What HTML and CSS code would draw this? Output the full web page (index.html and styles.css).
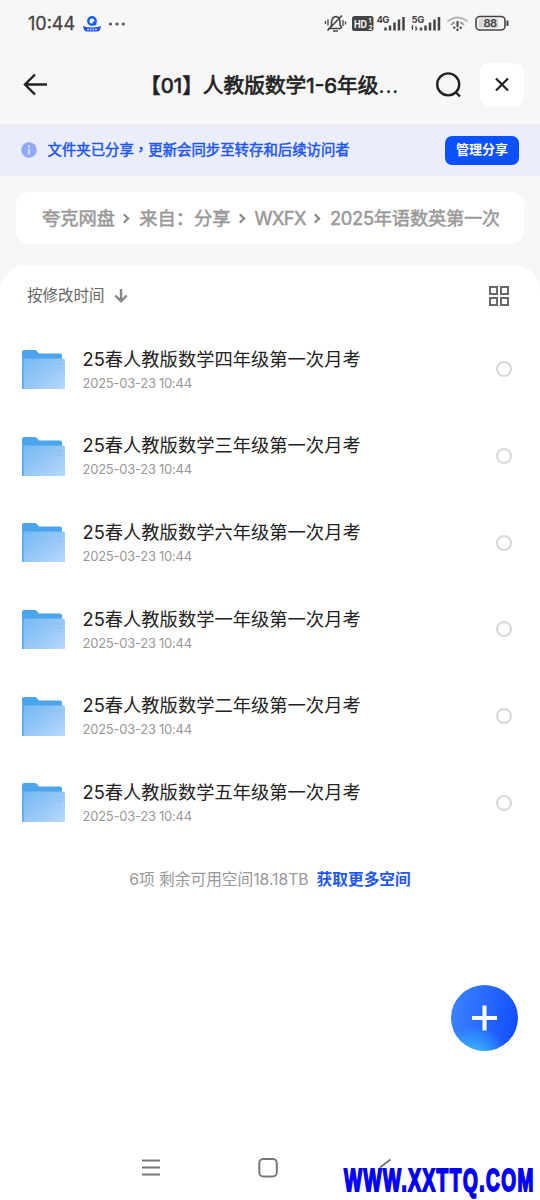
FILE: index.html
```html
<!DOCTYPE html>
<html lang="zh-CN">
<head>
<meta charset="utf-8">
<meta name="viewport" content="width=device-width">
<title>文件夹</title>
<link rel="stylesheet" href="styles.css">
</head>
<body>
<svg class="defs" width="0" height="0">
  <defs>
    <linearGradient id="front" x1="0" y1="0" x2="1" y2="1"><stop offset="0" stop-color="#74b9f2"/><stop offset=".55" stop-color="#98c8f7"/><stop offset="1" stop-color="#b8d9fd"/></linearGradient>
    <symbol id="folder" viewBox="0 0 44 42">
      <path d="M0 40V3q0-2 2-2h11q1.500 0 2.300 1.500L17 4.500h21q2 0 2 2V14H2v26z" fill="#4ba5ec"/>
      <path d="M1.500 9.500H41q2 0 2 2V40H1.500z" fill="url(#front)"/>
      <path d="M1 9v31" stroke="#69b0ea" fill="none"/>
      <path d="M35 15h4M35 19h4" stroke="#83b9e8" stroke-width=".8"/>
    </symbol>
  </defs>
</svg>
<div class="status">
  <span class="clock">10:44</span>
  <svg class="app" width="18" height="17" viewBox="0 0 18 17"><circle cx="9" cy="5" r="3.700" fill="none" stroke="#175cf5" stroke-width="2.400"/><path d="M10 6l3 3" stroke="#175cf5" stroke-width="2"/><path d="M0 10q9 3 18 0-.5 5-3.500 5.500h-11Q.5 15 0 10z" fill="#2455f0"/><path d="M4 13.500h10" stroke="#b9cdff" stroke-width="1.500" stroke-dasharray="2 .7"/></svg>
  <svg class="dots" width="18" height="6" viewBox="0 0 18 6" fill="#555"><circle cx="2.500" cy="3" r="1.600"/><circle cx="9" cy="3" r="1.600"/><circle cx="15.300" cy="3" r="1.600"/></svg>
  <svg class="signals" width="190" height="24" viewBox="322 12 190 24" fill="none" stroke="#444" stroke-width="1.600">
    <path d="M328 28.500h13M330 28l1.500-3v-3q.5-5 4.500-5.500 3.500.5 4 5v3.500l2 3M333 31h5M327.500 30.500L342 15.500"/><path d="M328 19.500v6M325.500 21v3M343 20v6M345.500 21.500v3" stroke-width="1.300"/>
    <rect x="352" y="16" width="21.500" height="15" rx="2.500" fill="#444" stroke="none"/>
    <g fill="#f7f7f7" stroke="none" class="tiny"><text x="354" y="27.500" font-size="10" textLength="13" lengthAdjust="spacingAndGlyphs">HD</text><text x="368.500" y="22.500" font-size="6.500">1</text><text x="368.500" y="30" font-size="6.500">2</text></g>
    <g fill="#444" stroke="none" class="tiny"><text x="376.500" y="22.500" font-size="9.500" textLength="13">4G</text><text x="411.500" y="22.500" font-size="9.500" textLength="13">5G</text></g>
    <path d="M385.500 30.500v-3M390 30.500v-5M394.500 30.500v-8M399 30.500v-11M403.500 30.500v-13.500M421 30.500v-3M425.500 30.500v-5M430 30.500v-8M434.500 30.500v-11M439 30.500v-13.500" stroke-width="2.500"/>
    <path d="M412.500 30v-4l-1 1.500M416 26v4l1.300-1.500" stroke-width="1.100"/>
    <path d="M447.500 21.500q10-8 20 0" stroke="#b4b4b4" stroke-width="2"/><path d="M451 25q2-2.500 4-2.500M464 25q-2-2.500-4-2.500" stroke="#999" stroke-width="1.800"/><path d="M457.500 21v6M457.500 28.500v2.500M453.500 27l1.500 1.500M461.500 27l-1.500 1.500" stroke-width="2"/>
    <rect x="476" y="16.500" width="29" height="13.500" rx="4"/><path d="M507.500 20.500v5.500" stroke-width="2"/><rect x="478.500" y="18.500" width="20" height="9.500" rx="1.500" fill="#d7d7d7" stroke="none"/><text x="483.500" y="27.300" font-size="11" textLength="13.500" fill="#444" stroke="none" class="tiny light">88</text>
  </svg>
</div>
<header class="nav">
  <svg class="back" width="26" height="24" viewBox="0 0 26 24" fill="none" stroke="#222" stroke-width="2.400"><path d="M25 11.500H3M13 1.500L3 11.500l10 10"/></svg>
  <h1>【01】人教版数学1-6年级<span class="ell">...</span></h1>
  <svg class="search" width="28" height="28" viewBox="0 0 28 28" fill="none" stroke="#222" stroke-width="2.400"><circle cx="13.200" cy="13.400" r="11"/><path d="M20.500 21l4.500 4.500"/></svg>
  <button class="close"><svg width="16" height="16" viewBox="0 0 16 16" stroke="#222" stroke-width="2.200"><path d="M2 1.500l12 12M14 1.500l-12 12"/></svg></button>
</header>
<section class="notice">
  <svg width="16" height="16" viewBox="0 0 16 16"><circle cx="8" cy="8" r="7.800" fill="#90aaf7"/><path d="M8 7v5.500M8 3.500v2" stroke="#dce5ff" stroke-width="1.800"/></svg>
  <p>文件夹已分享<span class="comma" lang="zh-TW">，</span>更新会同步至转存和后续访问者</p>
  <button>管理分享</button>
</section>
<nav class="crumbs"><div class="trail"><span class="c1">夸克网盘</span><i></i><span class="c2">来自：分享</span><i></i><span class="c3">WXFX</span><i></i><span class="c4">2025年语数英第一次</span></div></nav>
<main>
  <div class="sort"><span>按修改时间</span><svg width="14" height="15" viewBox="0 0 14 15" fill="none" stroke="#888" stroke-width="2.400"><path d="M7 1v12M1.200 7.500L7 13.200l5.800-5.700"/></svg>
  <svg class="grid" width="20" height="20" viewBox="0 0 20 20" fill="none" stroke="#686868" stroke-width="2"><rect x="1" y="1" width="7" height="7"/><rect x="12" y="1" width="7" height="7"/><rect x="1" y="12" width="7" height="7"/><rect x="12" y="12" width="7" height="7"/></svg></div>
  <ul>
    <li><svg class="folder"><use href="#folder"/></svg><div><h2>25春人教版数学四年级第一次月考</h2><time>2025-03-23 10:44</time></div><b></b></li>
    <li><svg class="folder"><use href="#folder"/></svg><div><h2>25春人教版数学三年级第一次月考</h2><time>2025-03-23 10:44</time></div><b></b></li>
    <li><svg class="folder"><use href="#folder"/></svg><div><h2>25春人教版数学六年级第一次月考</h2><time>2025-03-23 10:44</time></div><b></b></li>
    <li><svg class="folder"><use href="#folder"/></svg><div><h2>25春人教版数学一年级第一次月考</h2><time>2025-03-23 10:44</time></div><b></b></li>
    <li><svg class="folder"><use href="#folder"/></svg><div><h2>25春人教版数学二年级第一次月考</h2><time>2025-03-23 10:44</time></div><b></b></li>
    <li><svg class="folder"><use href="#folder"/></svg><div><h2>25春人教版数学五年级第一次月考</h2><time>2025-03-23 10:44</time></div><b></b></li>
  </ul>
  <p class="space"><span>6项 剩余可用空间18.18TB</span><a>获取更多空间</a></p>
</main>
<button class="add"><svg width="26" height="26" viewBox="0 0 26 26" stroke="#fff" stroke-width="4"><path d="M12.500 .5v25M0 13h25"/></svg></button>
<footer>
  <svg width="20" height="20" viewBox="0 0 20 20" stroke="#777" stroke-width="2"><path d="M1 2.500h18M1 9.500h18M1 16.500h18"/></svg>
  <svg width="20" height="20" viewBox="0 0 20 20" fill="none" stroke="#777" stroke-width="2"><rect x="1.300" y="1" width="17.500" height="17.500" rx="4"/></svg>
  <svg width="20" height="20" viewBox="0 0 20 20" fill="none" stroke="#777" stroke-width="2"><path d="M15.500 1.500L5 9.500"/></svg>
</footer>
<svg class="mark" width="199" height="36" viewBox="0 0 199 36"><text x="3" y="27" textLength="191" lengthAdjust="spacingAndGlyphs">WWW.XXTTQ.COM</text></svg>
</body>
</html>
```
FILE: styles.css
```css
* { box-sizing: border-box; margin: 0; padding: 0; }
body { width: 540px; height: 1200px; position: relative; overflow: hidden; display: flex; flex-direction: column; background: #f7f7f7; color: #222; font-family: Inter, "Noto Sans CJK SC", sans-serif; white-space: nowrap; }
button { border: 0; font-family: inherit; }
svg { display: block; flex: none; }
.defs { position: absolute; }
.status { height: 47px; flex: none; display: flex; align-items: center; padding: 1px 28px 0; }
.clock { font-size: 18px; line-height: 24px; width: 55px; color: #444; -webkit-text-stroke: .3px #444; }
.dots { margin-left: 7px; }
.signals { margin-left: auto; }
.tiny { font-family: Inter, sans-serif; font-weight: 700; }
.light { font-weight: 600; }
.nav { height: 77px; flex: none; display: flex; align-items: center; padding: 0 16px 2px 22px; }
.nav h1 { font-size: 20.700px; line-height: 30px; padding-top: 2px; font-weight: 400; -webkit-text-stroke: .7px #222; width: 292px; margin-left: 92px; }
.search { margin-left: 3px; }
.close { width: 44px; height: 44px; margin-left: auto; border-radius: 10px; background: #fff; display: grid; place-items: center; }
.ell { letter-spacing: 1px; -webkit-text-stroke: 0; }
.notice { height: 52px; flex: none; display: flex; align-items: center; padding: 0 21px; background: #ebeefa; }
.notice p { margin-left: 10.500px; padding-bottom: 2px; color: #1e57f2; font-size: 14.400px; line-height: 22px; -webkit-text-stroke: .5px #1e57f2; }
.comma { font-family: "Noto Sans CJK TC", sans-serif; }
.notice button { margin-left: auto; width: 74px; height: 29px; border-radius: 7px; background: #0c51ff; color: #fff; font-size: 13px; font-weight: 700; line-height: 27px; padding-bottom: 1px; }
.crumbs { margin: 16px 16px 0; height: 52px; flex: none; border-radius: 14px; background: #fff; padding: 0 25px 0 26px; }
.trail { height: 52px; width: 457px; overflow: hidden; display: flex; align-items: center; font-size: 18.300px; color: #999; -webkit-text-stroke: .5px #999; }
.trail span { flex: none; line-height: 28px; }
.c3 { letter-spacing: -.6px; }
.trail i { flex: none; width: 7px; height: 7px; margin: 0 11px 0 6px; border: solid #888; border-width: 2px 2px 0 0; transform: rotate(45deg); }
.trail .c4 { letter-spacing: -.25px; }
main { margin-top: 21px; flex: 1; background: #fff; border-radius: 26px 26px 0 0; }
.sort { height: 61px; display: flex; align-items: center; padding: 0 31px 0 27px; gap: 9px; color: #666; font-size: 15.500px; }
.sort span { padding-bottom: 3px; }
.grid { margin-left: auto; }
ul { list-style: none; }
li { height: 86.650px; display: flex; align-items: center; padding: 0 28px 0 22px; }
.folder { width: 44px; height: 42px; position: relative; top: .8px; }
li div { margin: -1px 0 0 16.500px; }
h2 { font-size: 18.300px; font-weight: 400; line-height: 26px; color: #222; }
time { display: block; font-size: 13px; letter-spacing: -.25px; line-height: 18px; margin-top: 2px; color: #999; }
li b { margin-left: auto; width: 16px; height: 16px; border: 2px solid #d8d8d8; border-radius: 50%; }
.space { display: flex; justify-content: center; gap: 8px; margin-top: 21px; line-height: 26px; font-size: 15.700px; color: #999; }
.space a { color: #1e57f2; font-weight: 700; }
.add { position: absolute; left: 451px; top: 985px; width: 67px; height: 66px; border-radius: 50%; display: grid; place-items: center; background: radial-gradient(circle at 35% 115%, #42ccff 0, transparent 40%), linear-gradient(100deg, #3c86ff, #104bff); }
footer { height: 66px; flex: none; background: #fff; display: flex; padding: 24px 0 0 141px; gap: 97px; }
.mark { position: absolute; left: 341px; top: 1164px; }
.mark text { font-family: "Liberation Sans Narrow", "Liberation Sans", sans-serif; font-size: 31.500px; font-weight: 700; fill: #0000f5; stroke: #0000f5; stroke-width: 2px; letter-spacing: 2.500px; }
```
